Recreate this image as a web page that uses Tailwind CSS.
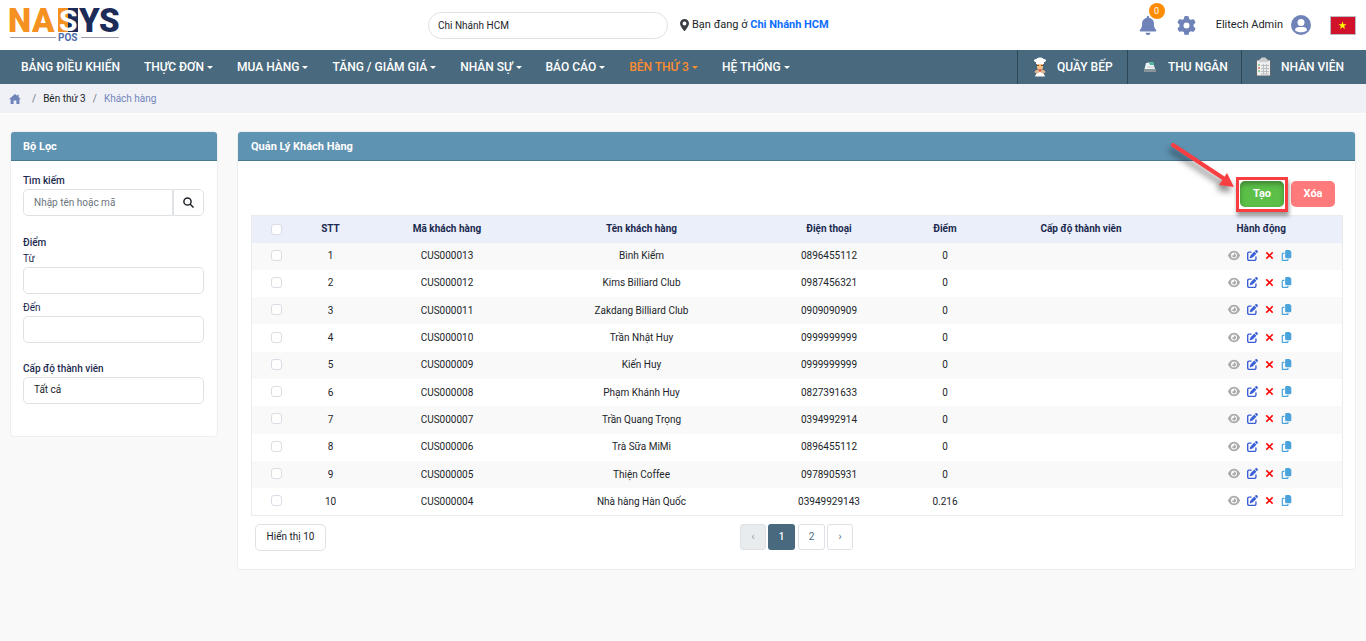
<!DOCTYPE html>
<html lang="vi">
<head>
<meta charset="utf-8">
<title>Quản Lý Khách Hàng</title>
<script src="https://cdn.jsdelivr.net/npm/@tailwindcss/browser@4"></script>
</head>
<body class="min-h-screen bg-[#f9f9f9] font-[Roboto,'Noto_Sans',sans-serif] text-[10px] leading-4 text-[#212529]">
<svg class="hidden">
  <symbol id="eye" viewBox="0 0 576 512"><path d="M288 32c-80.800 0-145.500 36.800-192.600 80.600C48.600 156 17.300 208 2.500 243.700c-3.300 7.900-3.300 16.700 0 24.600C17.300 304 48.600 356 95.400 399.400C142.500 443.200 207.200 480 288 480s145.500-36.800 192.600-80.600c46.800-43.500 78.100-95.400 93-131.100c3.300-7.900 3.300-16.700 0-24.600c-14.900-35.700-46.200-87.700-93-131.100C433.500 68.800 368.800 32 288 32zM144 256a144 144 0 1 1 288 0 144 144 0 1 1-288 0zm144-64c0 35.300-28.700 64-64 64c-7.100 0-13.900-1.200-20.300-3.300c-5.500-1.800-11.900 1.600-11.700 7.400c.3 6.900 1.300 13.800 3.200 20.700c13.700 51.200 66.400 81.600 117.600 67.900s81.600-66.400 67.900-117.600c-11.100-41.500-47.800-69.400-88.600-71.100c-5.800-.2-9.200 6.100-7.400 11.700c2.100 6.400 3.300 13.200 3.300 20.300z"/></symbol>
  <symbol id="edit" viewBox="0 0 512 512"><path d="M471.600 21.700c-21.900-21.900-57.300-21.900-79.200 0L362.300 51.700l97.900 97.900 30.100-30.100c21.900-21.900 21.900-57.300 0-79.200L471.600 21.700zM172.400 241.700c-6.100 6.100-10.800 13.600-13.500 21.900l-29.600 88.800c-2.900 8.600-.6 18.100 5.800 24.600s15.900 8.700 24.600 5.800l88.800-29.600c8.200-2.700 15.700-7.400 21.900-13.500L437.700 172.300 339.700 74.300 172.400 241.700zM96 64C43 64 0 107 0 160V416c0 53 43 96 96 96H352c53 0 96-43 96-96V320c0-17.700-14.300-32-32-32s-32 14.300-32 32v96c0 17.700-14.300 32-32 32H96c-17.700 0-32-14.300-32-32V160c0-17.700 14.300-32 32-32h96c17.700 0 32-14.300 32-32s-14.300-32-32-32H96z"/></symbol>
  <symbol id="cross" viewBox="0 0 10 10"><path d="M1.500 1.500l7 7M8.500 1.500l-7 7" fill="none" stroke="currentColor" stroke-width="1.700"/></symbol>
  <symbol id="copy" viewBox="0 0 512 512"><path d="M256 0h144l80 80v240c0 35-29 64-64 64H256c-35 0-64-29-64-64V64c0-35 29-64 64-64z"/><path d="M96 128h64v56H88v272h208v-32h56v24c0 35-29 64-64 64H96c-35 0-64-29-64-64V192c0-35 29-64 64-64z"/></symbol>
</svg>

<header class="flex h-[50px] items-center bg-white text-[11px]">
  <a href="#" class="ml-2 block w-[420px] shrink-0" aria-label="NASYS POS">
    <svg class="overflow-visible" width="114" height="42" viewBox="0 0 114 42" font-family="Roboto, sans-serif" font-weight="900">
      <rect x="50" y="4" width="10" height="24" fill="#f59120"/><rect x="60" y="4" width="10" height="24" fill="#1d2b58"/>
      <g font-size="33">
        <text x="0" y="28" fill="#f59120">N</text><text x="24" y="28" fill="#f59120">A</text>
        <text x="71" y="28" fill="#1d2b58">Y</text><text x="91" y="28" fill="#1d2b58">S</text>
      </g>
      <text x="51" y="27" font-size="30" font-weight="700" fill="#fff">S</text>
      <path d="M2 33.500H48M73 33.500H111" stroke="#9a9fb0"/>
      <text x="50" y="37" font-size="10" font-weight="700" fill="#4d6cab">POS</text>
    </svg>
  </a>
  <input aria-label="Chi nhánh" value="Chi Nhánh HCM" class="h-[27px] w-60 rounded-full border border-[#dee2e6] bg-white px-[9px] text-[10px]">
  <p class="ml-3 flex items-center gap-[3px]">
    <svg class="h-3 w-[9px]" viewBox="0 0 384 512" fill="#3b3e42"><path d="M215.700 499.200C267 435 384 279.400 384 192C384 86 298 0 192 0S0 86 0 192c0 87.400 117 243 168.300 307.200c12.300 15.300 35.100 15.300 47.400 0zM192 110a82 82 0 1 1 0 164 82 82 0 1 1 0-164z"/></svg>
    <span>Bạn đang ở <b class="text-[#0d6efd]">Chi Nhánh HCM</b></span>
  </p>
  <div class="ml-auto flex items-center pr-[10px]">
    <button class="relative mr-5" aria-label="Thông báo">
      <svg class="h-[19px] w-[18px]" viewBox="0 0 448 512" fill="#6f83b9"><path d="M224 0c-17.700 0-32 14.300-32 32V49.900C119.500 61.400 64 124.200 64 200v33.400c0 45.400-15.500 89.500-43.800 124.900L5.300 377c-5.800 7.200-6.900 17.100-2.900 25.400S14.800 416 24 416H424c9.200 0 17.600-5.300 21.600-13.600s2.900-18.200-2.900-25.400l-14.900-18.600C399.500 322.900 384 278.800 384 233.400V200c0-75.800-55.500-138.600-128-150.100V32c0-17.700-14.300-32-32-32zM160 448c0 35 29 64 64 64s64-29 64-64z"/></svg>
      <span class="absolute -top-[13px] left-[10px] size-4 rounded-full bg-[#ff8c00] text-center text-[9px] leading-4 text-white">0</span>
    </button>
    <button class="mr-5" aria-label="Cài đặt">
      <svg class="size-[19px]" viewBox="0 0 512 512" fill="#6f83b9"><path d="M495.900 166.600c3.200 8.700 .5 18.400-6.400 24.600l-43.300 39.400c1.100 8.300 1.700 16.800 1.700 25.400s-.6 17.100-1.700 25.400l43.300 39.400c6.900 6.200 9.600 15.900 6.400 24.600c-4.400 11.900-9.700 23.300-15.800 34.300l-4.700 8.100c-6.600 11-14 21.400-22.100 31.200c-5.900 7.200-15.700 9.600-24.500 6.800l-55.700-17.700c-13.400 10.300-28.200 18.900-44 25.400l-12.500 57.100c-2 9.100-9 16.300-18.200 17.800c-13.800 2.300-28 3.500-42.500 3.500s-28.700-1.200-42.500-3.500c-9.200-1.500-16.200-8.700-18.200-17.800l-12.500-57.100c-15.800-6.500-30.600-15.100-44-25.400L83.100 425.900c-8.800 2.800-18.600 .3-24.500-6.800c-8.100-9.800-15.500-20.200-22.100-31.200l-4.700-8.100c-6.100-11-11.400-22.400-15.800-34.300c-3.200-8.700-.5-18.400 6.400-24.600l43.300-39.400C64.600 273.100 64 264.600 64 256s.6-17.100 1.700-25.400L22.400 191.200c-6.900-6.200-9.600-15.900-6.400-24.600c4.400-11.900 9.700-23.300 15.800-34.300l4.700-8.100c6.600-11 14-21.400 22.100-31.200c5.900-7.200 15.700-9.600 24.500-6.800l55.700 17.700c13.400-10.300 28.200-18.900 44-25.400l12.500-57.100c2-9.100 9-16.300 18.200-17.800C227.300 1.200 241.500 0 256 0s28.700 1.200 42.500 3.500c9.200 1.500 16.200 8.700 18.200 17.800l12.500 57.100c15.800 6.500 30.600 15.100 44 25.400l55.700-17.700c8.800-2.800 18.600-.3 24.500 6.800c8.100 9.800 15.500 20.200 22.100 31.200l4.700 8.100c6.100 11 11.400 22.400 15.800 34.300zM256 336a80 80 0 1 0 0-160 80 80 0 1 0 0 160z"/></svg>
    </button>
    <a href="#" class="flex items-center gap-2">Elitech Admin
      <svg class="size-5" viewBox="0 0 20 20"><circle cx="10" cy="10" r="10" fill="#6f83b9"/><circle cx="10" cy="7.500" r="3.500" fill="#fff"/><path d="M4 15.300c0-2.500 2-3.300 4-3.300h4c2 0 4 .8 4 3.300-3 2.700-9 2.700-12 0z" fill="#fff"/></svg>
    </a>
    <button class="ml-[19px]" aria-label="Tiếng Việt">
      <svg width="26" height="19" viewBox="0 0 26 19"><rect x=".5" y=".5" width="25" height="18" fill="#d0122a" stroke="#b9bdc2"/><path d="M12.500 5.200l1 3h3.100l-2.500 1.900 1 3-2.600-1.900-2.600 1.900 1-3-2.500-1.900h3.100z" fill="#ff0"/></svg>
    </button>
  </div>
</header>

<nav class="flex h-[34px] items-center bg-[#48697e] text-[12px] font-medium text-white">
  <div class="flex items-center gap-6 pl-[21px] whitespace-nowrap" id="menu"></div>
  <div class="ml-auto flex h-full whitespace-nowrap">
    <a href="#" class="flex w-[110px] items-center gap-2 border-l border-[#2d4757] pl-[13px]">
      <svg width="18" height="20" viewBox="0 0 18 20"><path d="M5 7V5C2 5 2.500 1.500 5.500 2 6.500 0 11.500 0 12.500 2c3-.5 3.500 3 .5 3v2z" fill="#fff"/><path d="M6 7h6v3c0 2-1.300 3.500-3 3.500S6 12 6 10z" fill="#f5c283"/><path d="M6 8.500h2M10 8.500h2" stroke="#7a4d2c"/><path d="M3.500 15.500c0-2 2-3 5.500-3s5.500 1 5.500 3l-2 .5v3h-7v-3z" fill="#e3b98f"/><path d="M7 12.500h4L9 15z" fill="#d9453a"/><path d="M5 17l4-2 4 2 1 2.500H4z" fill="#fff"/></svg>
      <span>QUẦY BẾP</span></a>
    <a href="#" class="flex w-[114px] items-center gap-2 border-l border-[#2d4757] pl-[13px]">
      <svg width="18" height="18" viewBox="0 0 18 18"><path d="M5 5l7-1 2 7H3.500z" fill="#eef3f3"/><path d="M8 4.500l4.500-.5.700 3H9z" fill="#49b39d"/><path d="M6 9h7" stroke="#c4ced1"/><path d="M3 11h12v3H3z" fill="#87959b"/></svg>
      <span class="pl-[1px]">THU NGÂN</span></a>
    <a href="#" class="flex w-[125px] items-center gap-2 border-l border-[#2d4757] pl-[13px]">
      <svg width="18" height="20" viewBox="0 0 18 20"><path d="M1.500 3h14v16h-14z" fill="#eee" stroke="#5d686e"/><path d="M4 4C4 2 6 2 6.500.5h4C11 2 13 2 13 4v1H4z" fill="#c8ccce"/><path d="M6 8.500h8M6 11.500h8M6 14.500h8M6 17h8M8.500 7v10M11.500 7v10" stroke="#bcbfc1"/><path d="M3 8h2" stroke="#4caf50"/><path d="M3 11h2" stroke="#e53935"/><path d="M3 14h2" stroke="#4caf50"/></svg>
      <span>NHÂN VIÊN</span></a>
  </div>
</nav>

<nav aria-label="Breadcrumb" class="flex h-[30px] items-center gap-[7px] border-b border-white bg-[#f0f1f6] pl-[9px]">
  <a href="#" aria-label="Trang chủ" class="mr-1"><svg class="h-[10px] w-3" viewBox="0 0 12 10" fill="#6f83b9"><path d="M6 0L0 5.200h1.600V10h3V6.500h2.800V10h3V5.200H12L9.700 3.200V.7H8.300V2z"/></svg></a>
  <span class="text-[#6c757d]">/</span><a href="#">Bên thứ 3</a>
  <span class="text-[#6c757d]">/</span><span class="text-[#7285bb]">Khách hàng</span>
</nav>

<main class="flex items-start gap-[19px] px-[10px] pt-[17px]">
  <aside class="w-52 shrink-0 overflow-hidden rounded-[4px] border border-[#eceef0] bg-white pb-8">
    <h2 class="h-[29px] border-b border-[#487791] bg-[#5f93b2] px-3 text-[11px] leading-[29px] font-bold text-white">Bộ Lọc</h2>
    <form class="pt-3 pr-[13px] pl-3 text-[#1c2a50]">
      <label for="q" class="block font-medium">Tìm kiếm</label>
      <div class="flex">
        <input id="q" placeholder="Nhập tên hoặc mã" class="h-[27px] w-[150px] rounded-l-[5px] border border-[#dee2e6] px-[10px] placeholder:text-[#6c757d]">
        <button type="button" aria-label="Tìm" class="flex h-[27px] flex-1 items-center justify-center rounded-r-[5px] border border-[#dee2e6]"><svg width="11" height="11" viewBox="0 0 11 11" fill="none" stroke="#212529" stroke-width="1.500"><circle cx="4.500" cy="4.500" r="3.600"/><path d="M7.200 7.200l3.300 3.300"/></svg></button>
      </div>
      <p class="mt-[19px] font-medium">Điểm</p>
      <label for="from" class="block">Từ</label>
      <input id="from" class="block h-[27px] w-full rounded-[5px] border border-[#dee2e6] px-[10px]">
      <label for="to" class="mt-[6px] block">Đến</label>
      <input id="to" class="block h-[27px] w-full rounded-[5px] border border-[#dee2e6] px-[10px]">
      <label for="lvl" class="mt-[18px] block font-medium">Cấp độ thành viên</label>
      <select id="lvl" class="block h-[27px] w-full appearance-none rounded-[5px] border border-[#dee2e6] px-[10px] pb-[2px] text-[#212529]"><option>Tất cả</option></select>
    </form>
  </aside>

  <section class="min-w-0 flex-1 overflow-hidden rounded-[4px] border border-[#eceef0] bg-white pb-[19px]">
    <h1 class="h-[29px] border-b border-[#487791] bg-[#5f93b2] px-[13px] text-[11px] leading-[29px] font-bold text-white">Quản Lý Khách Hàng</h1>
    <div class="px-[13px]">
      <div class="flex justify-end gap-[7px] pt-5 pr-[7px] pb-2 text-[11px] font-bold text-white">
        <div class="relative">
          <button class="h-[26px] w-11 rounded-[5px] bg-[#5bbf48] shadow-[inset_0_3px_5px_rgba(0,0,0,0.3)]">Tạo</button>
          <span class="pointer-events-none absolute -top-1 -left-1 h-[35px] w-[52px] border-[3px] border-[#f93e42] shadow-[1px_4px_4px_rgba(0,0,0,0.4)]"></span>
          <svg class="pointer-events-none absolute -top-10 right-[48px] overflow-visible drop-shadow-[-2px_5px_3px_rgba(0,0,0,0.5)]" width="64" height="48" viewBox="0 0 64 48"><path d="M1 4L51 37" stroke="#f93e42" stroke-width="4" stroke-linecap="round"/><path d="M62 46L55 32 47 44z" fill="#f93e42"/></svg>
        </div>
        <button class="h-[26px] w-11 rounded-[5px] bg-[#ff7b7b]">Xóa</button>
      </div>
      <table class="h-[301px] w-full table-fixed border border-[#ebebed] text-center">
        <colgroup><col class="w-[49px]"><col class="w-[60px]"><col class="w-[173px]"><col class="w-[216px]"><col class="w-[159px]"><col class="w-[73px]"><col class="w-[199px]"><col class="w-[162px]"></colgroup>
        <thead><tr class="h-[27px] bg-[#eaeff9] text-[#1c2a50]">
          <th class="p-0"><input type="checkbox" aria-label="Chọn tất cả" class="mx-auto block size-[11px] appearance-none rounded-[3px] border border-[#dadde3] bg-white"></th><th>STT</th><th>Mã khách hàng</th><th>Tên khách hàng</th><th>Điện thoại</th><th>Điểm</th><th>Cấp độ thành viên</th><th>Hành động</th>
        </tr></thead>
        <tbody id="rows"></tbody>
      </table>
      <div class="relative flex items-center justify-center pt-2">
        <button class="absolute left-1 h-[27px] w-[71px] rounded-[5px] border border-[#dee2e6]">Hiển thị 10</button>
        <div class="flex gap-[2px] text-[#48697e]">
          <button class="h-[26px] w-[26px] rounded-[3px] border border-[#dee2e6] bg-[#e9ecef] text-[#8b959e]" disabled>‹</button>
          <button class="h-[26px] w-[27px] rounded-[3px] bg-[#48697e] font-medium text-white">1</button>
          <button class="ml-[1px] h-[26px] w-[27px] rounded-[3px] border border-[#dee2e6]">2</button>
          <button class="h-[26px] w-[26px] rounded-[3px] border border-[#dee2e6]">›</button>
        </div>
      </div>
    </div>
  </section>
</main>
<script>
const menu = ['BẢNG ĐIỀU KHIỂN','THỰC ĐƠN','MUA HÀNG','TĂNG / GIẢM GIÁ','NHÂN SỰ','BÁO CÁO','BÊN THỨ 3','HỆ THỐNG'];
document.getElementById('menu').innerHTML = menu.map((m, i) =>
  `<a href="#" class="flex items-center gap-[3px] ${i === 6 ? 'text-[#ff8c2e]' : ''}">${m}${i ? '<i class="border-x-[3px] border-t-[3px] border-x-transparent border-t-current"></i>' : ''}</a>`).join('');
const data = [
  ['CUS000013','Bình Kiểm','0896455112','0'],['CUS000012','Kims Billiard Club','0987456321','0'],
  ['CUS000011','Zakdang Billiard Club','0909090909','0'],['CUS000010','Trần Nhật Huy','0999999999','0'],
  ['CUS000009','Kiến Huy','0999999999','0'],['CUS000008','Phạm Khánh Huy','0827391633','0'],
  ['CUS000007','Trần Quang Trọng','0394992914','0'],['CUS000006','Trà Sữa MiMi','0896455112','0'],
  ['CUS000005','Thiện Coffee','0978905931','0'],['CUS000004','Nhà hàng Hàn Quốc','03949929143','0.216']];
document.getElementById('rows').innerHTML = data.map((r, i) => `<tr class="h-[27px] odd:bg-[#f9f9f9]">
  <td class="p-0"><input type="checkbox" aria-label="Chọn ${r[0]}" class="mx-auto mt-[-2px] block size-[11px] appearance-none rounded-[3px] border border-[#dadde3] bg-white"></td>
  <td>${i + 1}</td>${r.map(c => `<td>${c}</td>`).join('')}<td></td>
  <td class="pr-[2px] pb-[2px]"><div class="flex items-center justify-center">
    <button aria-label="Xem" class="mr-[7px] text-[#aaa]"><svg class="h-[11px] w-3" fill="currentColor"><use href="#eye"/></svg></button>
    <button aria-label="Sửa" class="mr-[7px] text-[#3b5fd6]"><svg class="size-[11px]" fill="currentColor"><use href="#edit"/></svg></button>
    <button aria-label="Xóa" class="mr-[7px] text-[#f00]"><svg class="size-[9px]"><use href="#cross"/></svg></button>
    <button aria-label="Sao chép" class="text-[#4ba3dc]"><svg class="size-[11px]" fill="currentColor"><use href="#copy"/></svg></button>
  </div></td></tr>`).join('');
</script>
</body>
</html>
